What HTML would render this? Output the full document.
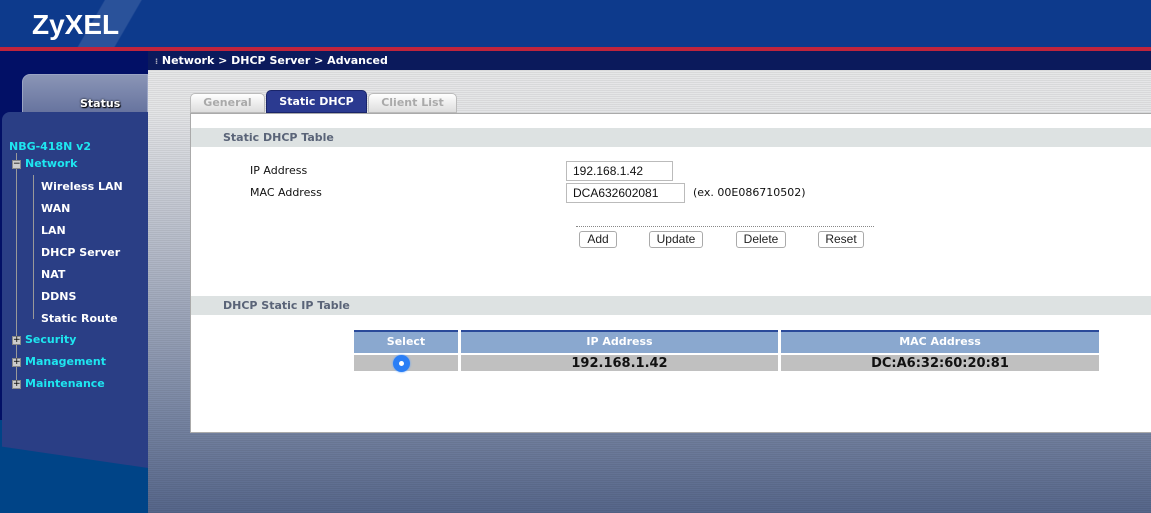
<!DOCTYPE html>
<html><head><style>
*{margin:0;padding:0;box-sizing:border-box}
body{width:1151px;height:513px;overflow:hidden;position:relative;font-family:"DejaVu Sans","Liberation Sans",sans-serif;background:#7d8aa6}
.a{position:absolute}
.b{font-weight:bold}
.nav{font-size:11px;font-weight:bold;color:#fff;position:absolute}
.cy{color:#1ee6f0}
.pm{position:absolute;width:9px;height:9px;background:#ccc;border:1px solid #888;font-size:9px;line-height:7px;text-align:center;color:#000}
.btn{position:absolute;top:231px;height:17px;border:1px solid #aaa;border-radius:3px;background:#fff;font:12px "Liberation Sans",sans-serif;text-align:center;line-height:15px;color:#222}
input{position:absolute;height:20px;border:1px solid #bbb;font:12px "Liberation Sans",sans-serif;padding-left:6px;color:#111}
.lb{position:absolute;font:11px 'DejaVu Sans',sans-serif;color:#111}
</style></head><body>
<div class="a" style="left:0;top:0;width:1151px;height:47px;background:#0d3a8c"></div>
<div class="a" style="left:60px;top:0;width:120px;height:47px;background:linear-gradient(120deg,transparent 30%,rgba(255,255,255,.12) 31%,rgba(255,255,255,.12) 55%,transparent 56%)"></div>
<div class="a" style="left:32px;top:9px;font:bold 28px 'Liberation Sans',sans-serif;color:#fff">ZyXEL</div>
<div class="a" style="left:0;top:47px;width:1151px;height:4px;background:#c0243c"></div>
<div class="a" style="left:0;top:51px;width:148px;height:462px;background:#021066"></div>
<div class="a" style="left:0;top:420px;width:148px;height:93px;background:#004487"></div>
<div class="a" style="left:22px;top:74px;width:126px;height:50px;background:linear-gradient(#8a95b6,#5d6a98);border-radius:8px 0 0 0;border:1px solid #9aa4c4"></div>
<div class="a" style="left:2px;top:112px;width:146px;height:356px;background:#2a3e85;border-radius:8px 0 0 0;clip-path:polygon(0 0,100% 0,100% 100%,0 94%)"></div>
<div class="a b" style="left:80px;top:97px;font-size:11px;color:#fff;text-shadow:0 0 2px #000,1px 1px 1px #000">Status</div>
<div class="nav cy" style="left:9px;top:140px">NBG-418N v2</div>
<div class="a" style="left:16px;top:153px;width:1px;height:232px;background:#999"></div>
<div class="a" style="left:33px;top:175px;width:1px;height:144px;background:#999"></div>
<div class="pm" style="left:12px;top:160px">−</div><div class="nav cy" style="left:25px;top:157px">Network</div>
<div class="nav" style="left:41px;top:180px">Wireless LAN</div>
<div class="nav" style="left:41px;top:202px">WAN</div>
<div class="nav" style="left:41px;top:224px">LAN</div>
<div class="nav" style="left:41px;top:246px">DHCP Server</div>
<div class="nav" style="left:41px;top:268px">NAT</div>
<div class="nav" style="left:41px;top:290px">DDNS</div>
<div class="nav" style="left:41px;top:312px">Static Route</div>
<div class="pm" style="left:12px;top:336px">+</div><div class="nav cy" style="left:25px;top:333px">Security</div>
<div class="pm" style="left:12px;top:358px">+</div><div class="nav cy" style="left:25px;top:355px">Management</div>
<div class="pm" style="left:12px;top:380px">+</div><div class="nav cy" style="left:25px;top:377px">Maintenance</div>
<div class="a" style="left:148px;top:51px;width:1003px;height:462px;background:linear-gradient(#e8e8e8 0,#e4e5e7 60px,#b4bac8 200px,#7d8aa6 350px,#56668a 462px)"></div>
<div class="a" style="left:148px;top:51px;width:1003px;height:462px;background:repeating-linear-gradient(transparent 0 1px,rgba(0,0,0,.06) 1px 2px)"></div>
<div class="a" style="left:148px;top:51px;width:1003px;height:19px;background:#0b1a5c"></div>
<div class="a b" style="left:155px;top:54px;font-size:11px;color:#fff"><span style="color:#aab;font-size:8px">⁝</span> Network &gt; DHCP Server &gt; Advanced</div>
<div class="a b" style="left:190px;top:93px;width:75px;height:20px;background:linear-gradient(#fff,#ddd);border:1px solid #bbb;border-radius:5px 5px 0 0;font-size:11px;color:#aaa;text-align:center;line-height:18px">General</div>
<div class="a b" style="left:266px;top:90px;width:101px;height:23px;background:#2b3a90;border:1px solid #1a256a;border-radius:5px 5px 0 0;font-size:11px;color:#fff;text-align:center;line-height:22px">Static DHCP</div>
<div class="a b" style="left:368px;top:93px;width:89px;height:20px;background:linear-gradient(#fff,#ddd);border:1px solid #bbb;border-radius:5px 5px 0 0;font-size:11px;color:#aaa;text-align:center;line-height:18px">Client List</div>
<div class="a" style="left:190px;top:113px;width:961px;height:320px;background:#fff;border:1px solid #aaa;border-right:none"></div>
<div class="a" style="left:191px;top:128px;width:960px;height:19px;background:#dde2e2"></div>
<div class="a b" style="left:223px;top:131px;font-size:11px;color:#5a6478">Static DHCP Table</div>
<div class="lb" style="left:250px;top:164px">IP Address</div>
<div class="lb" style="left:250px;top:186px">MAC Address</div>
<input style="left:566px;top:161px;width:107px" value="192.168.1.42">
<input style="left:566px;top:183px;width:119px" value="DCA632602081">
<div class="lb" style="left:693px;top:186px">(ex. 00E086710502)</div>
<div class="a" style="left:576px;top:226px;width:298px;border-top:1px dotted #888"></div>
<div class="btn" style="left:579px;width:38px">Add</div>
<div class="btn" style="left:649px;width:54px">Update</div>
<div class="btn" style="left:736px;width:50px">Delete</div>
<div class="btn" style="left:818px;width:46px">Reset</div>
<div class="a" style="left:191px;top:296px;width:960px;height:19px;background:#dde2e2"></div>
<div class="a b" style="left:223px;top:299px;font-size:11px;color:#5a6478">DHCP Static IP Table</div>
<div class="a b" style="left:354px;top:330px;width:104px;height:23px;background:linear-gradient(#2a4a9a 0 2px,#8aa8cf 2px);color:#fff;font-size:11px;text-align:center;line-height:23px">Select</div>
<div class="a b" style="left:461px;top:330px;width:317px;height:23px;background:linear-gradient(#2a4a9a 0 2px,#8aa8cf 2px);color:#fff;font-size:11px;text-align:center;line-height:23px">IP Address</div>
<div class="a b" style="left:781px;top:330px;width:318px;height:23px;background:linear-gradient(#2a4a9a 0 2px,#8aa8cf 2px);color:#fff;font-size:11px;text-align:center;line-height:23px">MAC Address</div>
<div class="a" style="left:354px;top:355px;width:104px;height:16px;background:#c0c0c0"></div>
<div class="a" style="left:461px;top:355px;width:317px;height:16px;background:#c0c0c0"></div>
<div class="a" style="left:781px;top:355px;width:318px;height:16px;background:#c0c0c0"></div>
<div class="a" style="left:393px;top:355px;width:17px;height:17px;border-radius:50%;background:#2a7ef5;box-shadow:0 0 2px #5aa0ff"></div>
<div class="a" style="left:399px;top:361px;width:5px;height:5px;border-radius:50%;background:#fff"></div>
<div class="a b" style="left:461px;top:356px;width:317px;text-align:center;font-size:13px;color:#111">192.168.1.42</div>
<div class="a b" style="left:781px;top:356px;width:318px;text-align:center;font-size:13px;color:#111">DC:A6:32:60:20:81</div>
</body></html>
